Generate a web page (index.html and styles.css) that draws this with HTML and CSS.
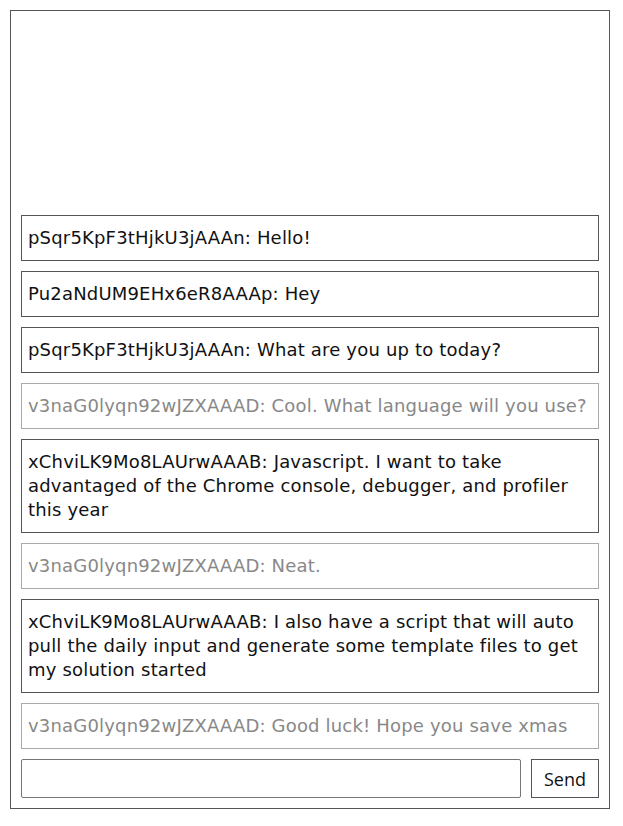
FILE: index.html
```html
<!DOCTYPE html>
<html>
<head>
<meta charset="utf-8">
<link rel="stylesheet" href="styles.css">
</head>
<body>
<div class="chat">
  <div class="messages">
    <div class="msg">pSqr5KpF3tHjkU3jAAAn: Hello!</div>
    <div class="msg">Pu2aNdUM9EHx6eR8AAAp: Hey</div>
    <div class="msg">pSqr5KpF3tHjkU3jAAAn: What are you up to today?</div>
    <div class="msg self">v3naG0lyqn92wJZXAAAD: Cool. What language will you use?</div>
    <div class="msg">xChviLK9Mo8LAUrwAAAB: Javascript. I want to take advantaged of the Chrome console, debugger, and profiler this year</div>
    <div class="msg self">v3naG0lyqn92wJZXAAAD: Neat.</div>
    <div class="msg">xChviLK9Mo8LAUrwAAAB: I also have a script that will auto pull the daily input and generate some template files to get my solution started</div>
    <div class="msg self">v3naG0lyqn92wJZXAAAD: Good luck! Hope you save xmas</div>
  </div>
  <form class="composer">
    <input class="field" type="text">
    <button class="send" type="button">Send</button>
  </form>
</div>
</body>
</html>
```
FILE: styles.css
```css
html, body {
  margin: 0;
  padding: 0;
  background: #fff;
}
body {
  padding: 10px;
  font-family: "DejaVu Sans", "Open Sans", sans-serif;
  font-size: 18px;
  letter-spacing: 0.18px;
  color: #111;
}
.chat {
  box-sizing: border-box;
  width: 600px;
  height: 799px;
  border: 1px solid #555;
  padding: 10px;
  display: flex;
  flex-direction: column;
  gap: 10px;
}
.messages {
  flex: 1;
  display: flex;
  flex-direction: column;
  justify-content: flex-end;
  gap: 10px;
}
.msg {
  border: 1px solid #555;
  padding: 10px 5px 10px 6px;
  line-height: 24px;
}
.msg.self {
  border-color: #aaa;
  color: #888;
}
.composer {
  margin: 0;
  display: flex;
  gap: 10px;
  height: 39px;
}
.field {
  flex: 1;
  box-sizing: border-box;
  border: 1px solid #767676;
  border-radius: 2px;
  margin: 0;
  font: inherit;
}
.send {
  box-sizing: border-box;
  width: 68px;
  background: #fff;
  border: 1px solid #555;
  margin: 0;
  font-family: "Open Sans", sans-serif;
  font-size: 18px;
  letter-spacing: 0;
  color: #111;
  padding: 0;
}
```
